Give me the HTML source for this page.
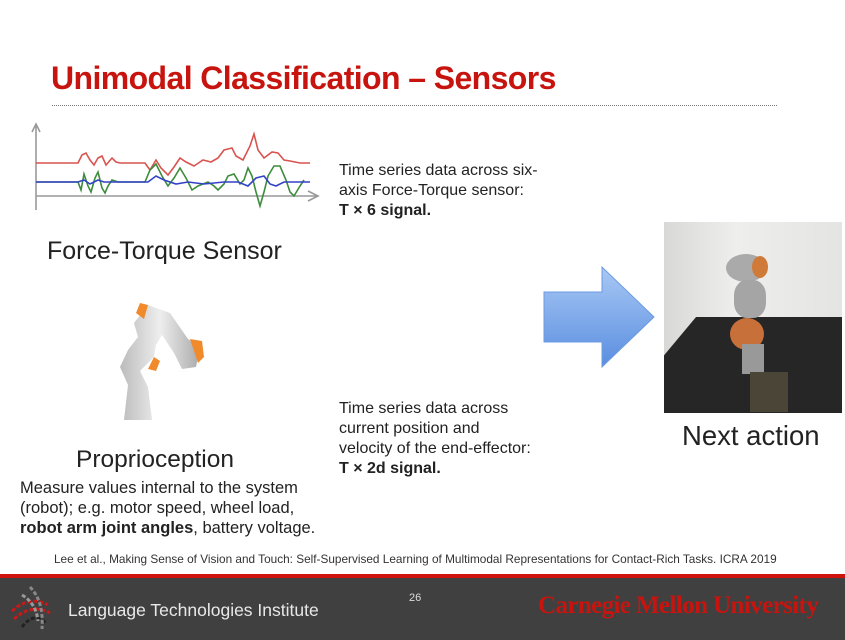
<!DOCTYPE html>
<html><head><style>
body{margin:0;width:845px;height:640px;position:relative;background:#fff;font-family:"Liberation Sans",sans-serif;overflow:hidden}
.a{position:absolute;white-space:nowrap}
</style></head><body>
<div class="a" style="left:51px;top:60px;font-size:32px;font-weight:bold;color:#c8140e;letter-spacing:-0.6px">Unimodal Classification – Sensors</div>
<div class="a" style="left:52px;top:105px;width:725px;border-top:1px dotted #777"></div>
<svg class="a" style="left:28px;top:120px" width="292" height="95" viewBox="0 0 292 95">
<g fill="none" stroke-width="1.6">
<path d="M8 90V6M4 12L8 4 12 12" stroke="#999"/>
<path d="M8 76H288M280 71L290 76 280 81" stroke="#999"/>
<path d="M8 43H50L54 35 58 33 62 40 66 45 70 38 74 36 78 45 84 38 88 42 92 43H117L122 50 128 40 133 48 140 55 146 47 152 38 158 42 166 46 175 40 183 42 190 38 196 30 204 28 208 36 215 40 222 26 226 14 230 30 236 38 244 32 250 33 256 40 262 41 272 43H282" stroke="#d9534f"/>
<path d="M8 62H50L53 70 56 54 60 66 63 72 67 58 70 52 74 68 77 73 80 66 84 60 90 62H117L122 50 128 44 134 56 140 66 146 58 152 48 158 58 164 70 170 66 180 62 186 66 190 70 196 64 200 56 206 54 212 64 216 60 220 48 224 56 228 72 232 86 236 72 240 56 246 46 252 46 258 60 262 72 266 76 272 66 276 60" stroke="#3c8c3c"/>
<path d="M8 62H50L56 60 62 64 70 60 76 62 90 62H120L128 56 136 60 148 64 160 62 176 64 196 62 210 62 220 66 228 58 236 56 242 64 248 66 256 62 270 62H282" stroke="#3342c8"/>
</g></svg>
<div class="a" style="left:47px;top:237px;font-size:25px;color:#222">Force-Torque Sensor</div>
<svg class="a" style="left:110px;top:295px" width="100" height="130" viewBox="0 0 100 130">
<defs><linearGradient id="g" x1="0" x2="1"><stop offset="0" stop-color="#bbb"/><stop offset=".5" stop-color="#eee"/><stop offset="1" stop-color="#aaa"/></linearGradient></defs>
<path d="M14 125L18 90 10 72 18 55 28 42 24 28 38 10 60 18 78 44 90 52 86 72 72 74 64 58 52 40 46 50 44 62 30 76 38 92 42 125Z" fill="url(#g)"/>
<path d="M38 10L30 8 26 18 34 24Z" fill="#f08a2a"/>
<path d="M80 44L92 46 94 62 88 68Z" fill="#f08a2a"/>
<path d="M44 62L50 66 46 76 38 74Z" fill="#f08a2a"/>
</svg>
<div class="a" style="left:76px;top:446px;font-size:24.5px;color:#222">Proprioception</div>
<div class="a" style="left:20px;top:478px;font-size:16.5px;line-height:20px;color:#222">Measure values internal to the system<br>(robot); e.g. motor speed, wheel load,<br><b>robot arm joint angles</b>, battery voltage.</div>
<div class="a" style="left:339px;top:161px;font-size:16px;line-height:20px;color:#222">Time series data across six-<br>axis Force-Torque sensor:<br><b>T × 6 signal.</b></div>
<div class="a" style="left:339px;top:399px;font-size:16px;line-height:20px;color:#222">Time series data across<br>current position and<br>velocity of the end-effector:<br><b>T × 2d signal.</b></div>
<svg class="a" style="left:542px;top:265px" width="115" height="105" viewBox="0 0 115 105">
<defs><linearGradient id="b" x1="0" y1="0" x2="0" y2="1"><stop offset="0" stop-color="#a8c8f4"/><stop offset="1" stop-color="#5a8ee0"/></linearGradient></defs>
<path d="M2 27H60V2L112 52 60 102V77H2Z" fill="url(#b)" stroke="#6b9be0"/>
</svg>
<div class="a" style="left:664px;top:222px;width:178px;height:191px;background:linear-gradient(90deg,#d8d8d6,#eeeeec 40%,#e4e4e2);overflow:hidden">
<div class="a" style="left:0;top:95px;width:178px;height:96px;background:#262626;clip-path:polygon(18% 0,100% 0,100% 100%,0 100%,0 40%)"></div>
<div class="a" style="left:62px;top:32px;width:40px;height:28px;border-radius:50%;background:#aaa"></div>
<div class="a" style="left:88px;top:34px;width:16px;height:22px;border-radius:50%;background:#d07a3a"></div>
<div class="a" style="left:70px;top:58px;width:32px;height:38px;border-radius:40%;background:#a5a5a5"></div>
<div class="a" style="left:66px;top:96px;width:34px;height:32px;border-radius:50%;background:#c8703a"></div>
<div class="a" style="left:78px;top:122px;width:22px;height:30px;background:#999"></div>
<div class="a" style="left:86px;top:150px;width:38px;height:40px;background:#4a4536"></div>
</div>
<div class="a" style="left:682px;top:420px;font-size:27.5px;color:#222">Next action</div>
<div class="a" style="left:54px;top:552px;font-size:11.8px;color:#333">Lee et al., Making Sense of Vision and Touch: Self-Supervised Learning of Multimodal Representations for Contact-Rich Tasks. ICRA 2019</div>
<div class="a" style="left:0;top:574px;width:845px;height:4px;background:#d0120c"></div>
<div class="a" style="left:0;top:578px;width:845px;height:62px;background:#404040"></div>
<svg class="a" style="left:8px;top:583px" width="56" height="50" viewBox="0 0 56 50">
<g fill="none" stroke-width="3" stroke-dasharray="4 2">
<path d="M4 28Q22 12 40 22" stroke="#c81818"/><path d="M6 36Q24 20 42 30" stroke="#c81818"/>
<path d="M14 44Q26 28 38 40" stroke="#222"/><path d="M14 12Q28 20 30 38" stroke="#999"/>
<path d="M22 4Q36 18 34 46" stroke="#888"/></g></svg>
<div class="a" style="left:68px;top:600px;font-size:17.5px;color:#e8e8e8">Language Technologies Institute</div>
<div class="a" style="left:409px;top:592px;font-size:11px;color:#ddd">26</div>
<div class="a" style="left:538px;top:592px;font-size:25px;font-family:'Liberation Serif',serif;font-weight:bold;color:#c8140e;letter-spacing:-0.6px">Carnegie Mellon University</div>
</body></html>
